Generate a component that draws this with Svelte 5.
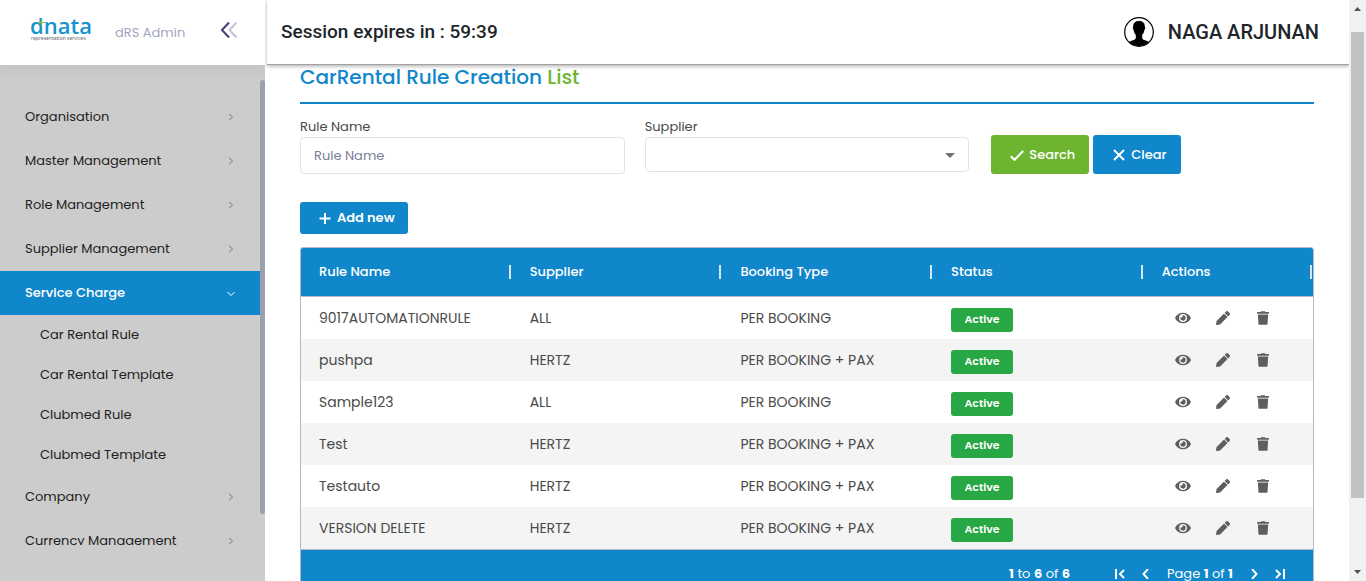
<script>
  const before = ['Organisation', 'Master Management', 'Role Management', 'Supplier Management'];
  const children = ['Car Rental Rule', 'Car Rental Template', 'Clubmed Rule', 'Clubmed Template'];
  const after = ['Company', 'Currency Management'];
  const columns = ['Rule Name', 'Supplier', 'Booking Type', 'Status', 'Actions'];
  const rules = [
    { name: '9017AUTOMATIONRULE', supplier: 'ALL', type: 'PER BOOKING' },
    { name: 'pushpa', supplier: 'HERTZ', type: 'PER BOOKING + PAX' },
    { name: 'Sample123', supplier: 'ALL', type: 'PER BOOKING' },
    { name: 'Test', supplier: 'HERTZ', type: 'PER BOOKING + PAX' },
    { name: 'Testauto', supplier: 'HERTZ', type: 'PER BOOKING + PAX' },
    { name: 'VERSION DELETE', supplier: 'HERTZ', type: 'PER BOOKING + PAX' }
  ];
  let ruleName = $state('');
  let supplier = $state('');
  let open = $state(true);

  function clear() {
    ruleName = '';
    supplier = '';
  }
</script>

{#snippet chevron()}
  <svg class="chevron" width="6" height="8" viewBox="0 0 6 8"><path d="M1 .8 4.6 4 1 7.2" /></svg>
{/snippet}

<div class="app">
  <aside>
    <div class="brand">
      <svg class="logo" width="60" height="28" viewBox="0 0 60 28" role="img" aria-label="dnata representation services">
        <text x="0" y="18" class="logo-name">dnata</text>
        <path d="M8 6.500h7M11.500 3v7" stroke="#8cc63f" stroke-width="1" />
        <text x="1" y="24" class="logo-tag">representation services</text>
      </svg>
      <span class="product">dRS Admin</span>
      <button class="collapse" aria-label="Collapse menu">
        <svg width="18" height="18" viewBox="0 0 18 18">
          <path d="M9 1.500 2 9l7 7.500" stroke="#3f4079" />
          <path d="M16.500 1.500 9.500 9l7 7.500" stroke="#c4c4d7" />
        </svg>
      </button>
    </div>
    <div class="nav-area">
      <nav>
        {#each before as item}
          <a class="item" href="#menu"><span>{item}</span>{@render chevron()}</a>
        {/each}
        <button class="item active" onclick={() => (open = !open)} aria-expanded={open}>
          <span>Service Charge</span>
          <svg class="chevron" width="10" height="6" viewBox="0 0 10 6"><path d="M1.500 1 5 4.600 8.500 1" /></svg>
        </button>
        {#if open}
          {#each children as item}
            <a class="item child" href="#menu"><span>{item}</span></a>
          {/each}
        {/if}
        {#each after as item}
          <a class="item" href="#menu"><span>{item}</span>{@render chevron()}</a>
        {/each}
      </nav>
      <div class="nav-scroll"></div>
    </div>
  </aside>

  <main>
    <header>
      <div>Session expires in : 59:39</div>
      <div class="user">
        <svg width="30" height="30" viewBox="0 0 30 30">
          <defs><clipPath id="face"><circle cx="15" cy="15" r="14" /></clipPath></defs>
          <circle cx="15" cy="15" r="14.300" fill="#fff" stroke="#000" stroke-width="1.200" />
          <path clip-path="url(#face)" d="M15 4c3.800 0 6 2.100 5.800 5.800.7.700.4 2.300-.4 3.100-.3 2.300-1.200 3.900-2.200 5v2.800c0 1.800 2.200 2.300 4.300 3.100 2 .7 3.300 1.400 4 2.700V30h-23v-3.500c.7-1.300 2-2 4-2.700 2.100-.8 4.300-1.300 4.300-3.100v-2.800c-1-1.100-1.900-2.700-2.200-5-.8-.8-1.100-2.400-.4-3.100C9 6.100 11.200 4 15 4z" />
        </svg>
        <span>NAGA ARJUNAN</span>
      </div>
    </header>

    <section>
      <h1>CarRental Rule Creation <em>List</em></h1>
      <form onsubmit={(e) => e.preventDefault()}>
        <div class="field">
          <label for="rule">Rule Name</label>
          <input id="rule" type="text" placeholder="Rule Name" bind:value={ruleName} />
        </div>
        <div class="field">
          <label for="supplier">Supplier</label>
          <div class="select">
            <select id="supplier" bind:value={supplier}>
              <option value=""></option>
              <option>ALL</option>
              <option>HERTZ</option>
            </select>
            <svg width="10" height="5" viewBox="0 0 10 5"><path d="M0 0h10L5 5z" fill="#707070" /></svg>
          </div>
        </div>
        <div class="buttons">
          <button class="btn search" type="submit">
            <svg width="14" height="14" viewBox="0 0 14 14"><path d="M.8 8.200 4.500 11.800 13.200 3" /></svg>Search
          </button>
          <button class="btn" type="button" onclick={clear}>
            <svg width="14" height="14" viewBox="0 0 14 14"><path d="M2 2l10 10M12 2 2 12" /></svg>Clear
          </button>
        </div>
      </form>

      <button class="btn add">
        <svg width="14" height="14" viewBox="0 0 14 14"><path d="M7 2v11M1.500 7.500h11" /></svg>Add new
      </button>

      <div class="grid">
        <table>
          <thead>
            <tr>{#each columns as column}<th><div><span>{column}</span></div></th>{/each}</tr>
          </thead>
          <tbody>
            {#each rules as rule}
              <tr>
                <td>{rule.name}</td>
                <td>{rule.supplier}</td>
                <td>{rule.type}</td>
                <td><span class="badge">Active</span></td>
                <td>
                  <div class="actions">
                    <button aria-label="View">
                      <svg width="16" height="14" viewBox="0 0 576 512"><path d="M572.520 241.400C518.290 135.590 410.930 64 288 64S57.680 135.640 3.480 241.410a32.350 32.350 0 0 0 0 29.190C57.710 376.410 165.070 448 288 448s230.320-71.640 284.520-177.410a32.350 32.350 0 0 0 0-29.190zM288 400a144 144 0 1 1 144-144 143.930 143.930 0 0 1-144 144zm0-240a95.310 95.310 0 0 0-25.310 3.790 47.850 47.850 0 0 1-66.900 66.900A95.780 95.780 0 1 0 288 160z" /></svg>
                    </button>
                    <button aria-label="Edit">
                      <svg width="14" height="14" viewBox="0 0 512 512"><path d="M497.900 142.100l-46.100 46.100c-4.700 4.700-12.300 4.700-17 0l-111-111c-4.700-4.700-4.700-12.300 0-17l46.100-46.100c18.700-18.700 49.100-18.700 67.900 0l60.100 60.100c18.800 18.700 18.800 49.100 0 67.900zM284.200 99.800L21.600 362.400.4 483.900c-2.900 16.400 11.400 30.600 27.800 27.800l121.500-21.300 262.600-262.600c4.700-4.700 4.700-12.300 0-17l-111-111c-4.800-4.700-12.400-4.700-17.100 0z" /></svg>
                    </button>
                    <button aria-label="Delete">
                      <svg width="12" height="14" viewBox="0 0 448 512"><path d="M432 32H312l-9.400-18.700A24 24 0 0 0 281.100 0H166.800a23.720 23.720 0 0 0-21.400 13.300L136 32H16A16 16 0 0 0 0 48v32a16 16 0 0 0 16 16h416a16 16 0 0 0 16-16V48a16 16 0 0 0-16-16zM53.200 467a48 48 0 0 0 47.900 45h245.800a48 48 0 0 0 47.900-45L416 128H32z" /></svg>
                    </button>
                  </div>
                </td>
              </tr>
            {/each}
          </tbody>
        </table>
        <div class="pager">
          <span><b>1</b> to <b>6</b> of <b>6</b></span>
          <div class="pages">
            <button aria-label="First page"><svg width="10" height="10" viewBox="0 0 10 10"><path d="M1 0v10M9 1 5 5l4 4" /></svg></button>
            <button aria-label="Previous page"><svg width="10" height="10" viewBox="0 0 10 10"><path d="M7 0 2.500 5 7 10" /></svg></button>
            <span>Page <b>1</b> of <b>1</b></span>
            <button aria-label="Next page"><svg width="10" height="10" viewBox="0 0 10 10"><path d="M3 0 7.500 5 3 10" /></svg></button>
            <button aria-label="Last page"><svg width="10" height="10" viewBox="0 0 10 10"><path d="M9 0v10M1 1l4 4-4 4" /></svg></button>
          </div>
        </div>
      </div>
    </section>
  </main>

  <div class="page-scroll">
    <svg width="17" height="17" viewBox="0 0 17 17"><path d="M5 11h7L8.500 7z" fill="#505050" /></svg>
    <div class="track"><div class="thumb"></div></div>
    <svg width="17" height="17" viewBox="0 0 17 17"><path d="M5 6h7L8.500 10z" fill="#505050" /></svg>
  </div>
</div>

<style>
  :global(body) { overflow: hidden; }
  .app, .app * { box-sizing: border-box; }
  .app {
    display: grid;
    grid-template-columns: 265px minmax(0, 1fr) 17px;
    height: 100vh;
    background: #fff;
    color: #4a4a4a;
    font: 13px/20px Poppins, Inter, sans-serif;
  }
  button, input, select { font: inherit; margin: 0; }
  button { border: 0; padding: 0; background: none; cursor: pointer; }
  svg { display: block; flex: none; }
  path { stroke-linecap: butt; }

  aside { display: flex; flex-direction: column; min-height: 0; overflow: hidden; background: #ccc; }
  .brand {
    display: flex;
    align-items: center;
    flex: none;
    height: 65px;
    padding: 0 27px 0 30px;
    background: #fff;
    box-shadow: 0 0 16px rgba(60, 60, 90, 0.1);
  }
  .logo { margin-bottom: 6px; overflow: visible; }
  .logo-name { font: 600 22px "Open Sans", sans-serif; fill: #1593ce; }
  .logo-tag { font: 5px "Noto Sans", sans-serif; fill: #666; }
  .product { margin-left: 25px; color: #a2a5be; font-weight: 400; }
  .collapse { margin: 0 0 5px auto; }
  .collapse path { fill: none; stroke-width: 2; }
  .nav-area { display: flex; flex: 1; min-height: 0; margin: 15px 0 36px; }
  nav { flex: 1; min-width: 0; padding-top: 15px; overflow: hidden; }
  .item {
    display: flex;
    align-items: center;
    justify-content: space-between;
    width: 100%;
    height: 44px;
    padding: 0 25px;
    color: #222;
    text-decoration: none;
  }
  .chevron { fill: none; stroke: #77799a; stroke-width: 1; margin-right: 1px; }
  .active { padding-right: 24px; background: #1086cb; color: #fff; font-weight: 500; }
  .active .chevron { stroke: #fff; margin: 2px 0 0; }
  .child { height: 40px; padding-left: 40px; }
  .nav-scroll { flex: none; width: 5px; height: 434px; border-radius: 4px; background: #9aa0ae; }

  main { display: flex; flex-direction: column; min-width: 0; overflow: hidden; }
  header {
    display: flex;
    align-items: center;
    justify-content: space-between;
    flex: none;
    height: 65px;
    margin-left: 2px;
    padding: 0 30px 0 14px;
    border-bottom: 1px solid #a2a2a2;
    background: #fff;
    box-shadow: 0 1px 4px rgba(0, 0, 0, 0.35);
    color: #212529;
    font: 500 19px/24px Roboto, sans-serif;
  }
  .user { display: flex; align-items: center; gap: 14px; font-size: 20px; }
  section { padding: 0 35px; }
  h1 {
    margin: 0 0 13px;
    height: 39px;
    border-bottom: 2px solid #1086cb;
    color: #1086cb;
    font-size: 20px;
    font-weight: 500;
    line-height: 24px;
  }
  em { color: #6db52f; font-style: normal; }
  form { display: grid; grid-template-columns: repeat(3, minmax(0, 1fr)); gap: 20px; }
  label { display: block; }
  input {
    display: block;
    width: 100%;
    height: 37px;
    padding: 0 13px;
    border: 1px solid #e2e2ea;
    border-radius: 4px;
    color: #4a4a4a;
  }
  input::placeholder { color: #7c7e97; opacity: 1; }
  .select { position: relative; }
  select {
    display: block;
    width: 100%;
    height: 35px;
    border: 1px solid #e2e2ea;
    border-radius: 4px;
    background: #fff;
    appearance: none;
  }
  .select svg { position: absolute; right: 14px; top: 16px; pointer-events: none; }
  .buttons { display: flex; align-items: flex-end; gap: 4px; padding-left: 2px; }
  .btn {
    display: flex;
    align-items: center;
    gap: 5px;
    height: 39px;
    padding: 0 14px 0 19px;
    border-radius: 3px;
    background: #1086cb;
    color: #fff;
    font-weight: 500;
  }
  .btn svg { fill: none; stroke: #fff; stroke-width: 2; }
  .search { background: #6db52f; }
  .add { height: 32px; margin: 28px 0 13px; padding: 0 13px 0 18px; font-weight: 600; }

  .grid { border: 1px solid #b5b9cc; border-radius: 3px 3px 0 0; overflow: hidden; }
  table { width: 100%; table-layout: fixed; border-collapse: separate; border-spacing: 0; }
  th { width: 20.82%; height: 49px; padding: 0; background: #1086cb; border-bottom: 1px solid #b5b9cc; color: #fff; font-weight: 500; text-align: left; }
  th:last-child { width: auto; }
  th div { height: 14px; margin-right: 1px; padding-left: 18px; border-right: 2px solid #d7e6f2; line-height: 14px; }
  td { height: 42px; padding: 0 0 0 18px; font-size: 14px; white-space: nowrap; }
  tbody tr:nth-child(even) { background: #f4f4f4; }
  .badge {
    display: block;
    width: 62px;
    height: 24px;
    margin-top: 3px;
    border-radius: 3px;
    background: #28a745;
    color: #fff;
    font-size: 11px;
    font-weight: 600;
    line-height: 23px;
    text-align: center;
  }
  .actions { display: flex; padding-left: 1px; }
  .actions button { display: grid; place-items: center; width: 40px; height: 24px; }
  .actions svg { fill: #5e5e5e; }
  .pager {
    display: flex;
    align-items: center;
    justify-content: flex-end;
    gap: 45px;
    height: 48px;
    padding-right: 28px;
    border-top: 1px solid #b5b9cc;
    background: #1086cb;
    color: #fff;
  }
  .pager b { font-weight: 700; }
  .pages { display: flex; align-items: center; gap: 16px; }
  .pages svg { fill: none; stroke: #fff; stroke-width: 2; }

  .page-scroll { display: flex; flex-direction: column; background: #f1f1f1; }
  .track { flex: 1; padding: 15px 2px 66px; }
  .thumb { height: 100%; background: #c1c1c1; }
</style>
